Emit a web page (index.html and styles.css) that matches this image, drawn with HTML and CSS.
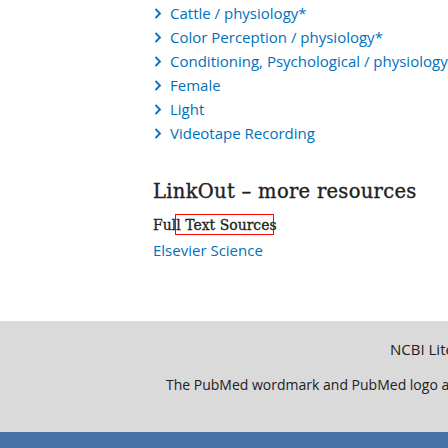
FILE: index.html
```html
<!DOCTYPE html>
<html>
<head>
<meta charset="utf-8">
<link rel="stylesheet" href="styles.css">
</head>
<body>
<div class="page">
  <main class="content">
    <ul class="terms">
      <li><span class="chev"><svg width="8" height="11" viewBox="0 0 8 11"><path d="M1.5 1 L6 5.5 L1.5 10" fill="none" stroke="#0071bc" stroke-width="1.8"/></svg></span><a>Cattle / physiology*</a></li>
      <li><span class="chev"><svg width="8" height="11" viewBox="0 0 8 11"><path d="M1.5 1 L6 5.5 L1.5 10" fill="none" stroke="#0071bc" stroke-width="1.8"/></svg></span><a>Color Perception / physiology*</a></li>
      <li><span class="chev"><svg width="8" height="11" viewBox="0 0 8 11"><path d="M1.5 1 L6 5.5 L1.5 10" fill="none" stroke="#0071bc" stroke-width="1.8"/></svg></span><a>Conditioning, Psychological / physiology*</a></li>
      <li><span class="chev"><svg width="8" height="11" viewBox="0 0 8 11"><path d="M1.5 1 L6 5.5 L1.5 10" fill="none" stroke="#0071bc" stroke-width="1.8"/></svg></span><a>Female</a></li>
      <li><span class="chev"><svg width="8" height="11" viewBox="0 0 8 11"><path d="M1.5 1 L6 5.5 L1.5 10" fill="none" stroke="#0071bc" stroke-width="1.8"/></svg></span><a>Light</a></li>
      <li><span class="chev"><svg width="8" height="11" viewBox="0 0 8 11"><path d="M1.5 1 L6 5.5 L1.5 10" fill="none" stroke="#0071bc" stroke-width="1.8"/></svg></span><a>Videotape Recording</a></li>
    </ul>
    <h2 class="title">LinkOut – more resources</h2>
    <div class="sub-row"><h3 class="subtitle">Full Text Sources<span class="mark"></span></h3></div>
    <a class="provider">Elsevier Science</a>
  </main>
  <footer class="footer">
    <div class="foot-title">NCBI Literature Resources</div>
    <div class="foot-note">The PubMed wordmark and PubMed logo are registered trademarks of the U.S. Department of Health and Human Services (HHS).</div>
  </footer>
  <div class="bottom-bar"></div>
</div>
</body>
</html>
```
FILE: styles.css
```css
html, body {
  margin: 0;
  padding: 0;
  background: #ffffff;
  overflow: hidden;
}
.page {
  width: 448px;
  height: 448px;
  overflow: hidden;
  font-family: "Open Sans", "Noto Sans", sans-serif;
}
.content {
  padding-left: 153px;
  padding-top: 1px;
  height: 321px;
  box-sizing: border-box;
  white-space: nowrap;
  overflow: hidden;
}
.terms {
  list-style: none;
  margin: 0;
  padding: 0;
}
.terms li {
  height: 24px;
  line-height: 24px;
  display: flex;
  align-items: center;
  font-size: 15px;
  color: #0071bc;
}
.chev {
  flex: 0 0 17px;
  display: flex;
  align-items: center;
  padding-left: 1px;
  box-sizing: border-box;
}
.terms a {
  color: #0071bc;
}
.title {
  margin: 33px 0 0 0;
  font-family: "DejaVu Serif", serif;
  font-weight: normal;
  -webkit-text-stroke: 0.35px #212121;
  font-size: 19.5px;
  letter-spacing: 0.3px;
  line-height: 28px;
  height: 28px;
  color: #212121;
}
.sub-row {
  margin-top: 7px;
  height: 24px;
}
.subtitle {
  margin: 0;
  font-family: "DejaVu Serif", serif;
  font-weight: normal;
  -webkit-text-stroke: 0.3px #212121;
  font-size: 14px;
  line-height: 24px;
  color: #212121;
  position: relative;
  display: inline-block;
}
.mark {
  position: absolute;
  left: 22px;
  top: 1px;
  width: 99px;
  height: 21px;
  box-sizing: border-box;
  border: 1px solid #ff0000;
}
.provider {
  display: block;
  margin-top: 1px;
  font-size: 15px;
  line-height: 24px;
  color: #0071bc;
}
.footer {
  height: 111px;
  background: #dadada;
  white-space: nowrap;
  color: #212121;
  font-size: 14px;
}
.foot-title {
  padding-left: 390px;
  padding-top: 18px;
  line-height: 20px;
  font-size: 15px;
}
.foot-note {
  padding-left: 166px;
  padding-top: 16px;
  line-height: 20px;
}
.bottom-bar {
  height: 16px;
  background: #4672a8;
}
```
